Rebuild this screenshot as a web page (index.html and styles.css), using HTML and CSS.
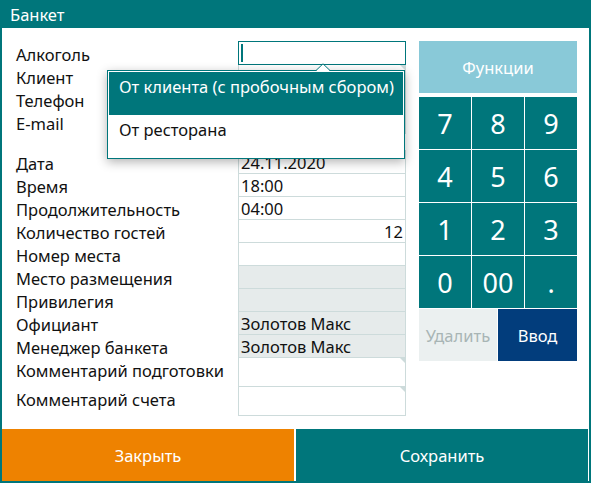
FILE: index.html
```html
<!DOCTYPE html>
<html lang="ru">
<head>
  <meta charset="UTF-8" />
  <title>Банкет</title>
  <link rel="stylesheet" href="styles.css">
</head>
<body>
<div class="window">
  <div class="title-bar">Банкет</div>

  <div class="content">
    <div class="form">
      <div class="group">
        <div class="row"><span class="label">Алкоголь</span><div class="field focused"><span class="caret"></span></div></div>
        <div class="row"><span class="label">Клиент</span><div class="field note"></div></div>
        <div class="row"><span class="label">Телефон</span><div class="field"></div></div>
        <div class="row"><span class="label">E-mail</span><div class="field"></div></div>
      </div>
      <div class="group">
        <div class="row"><span class="label">Дата</span><div class="field">24.11.2020</div></div>
        <div class="row"><span class="label">Время</span><div class="field">18:00</div></div>
        <div class="row"><span class="label">Продолжительность</span><div class="field">04:00</div></div>
        <div class="row"><span class="label">Количество гостей</span><div class="field num">12</div></div>
        <div class="row"><span class="label">Номер места</span><div class="field"></div></div>
        <div class="row"><span class="label">Место размещения</span><div class="field locked"></div></div>
        <div class="row"><span class="label">Привилегия</span><div class="field locked"></div></div>
        <div class="row"><span class="label">Официант</span><div class="field locked">Золотов Макс</div></div>
        <div class="row"><span class="label">Менеджер банкета</span><div class="field locked">Золотов Макс</div></div>
        <div class="row tall"><span class="label">Комментарий подготовки</span><div class="field note"></div></div>
        <div class="row tall"><span class="label">Комментарий счета</span><div class="field note"></div></div>
      </div>
    </div>

    <div class="side">
      <button class="func-btn">Функции</button>
      <div class="keypad">
        <button class="key">7</button>
        <button class="key">8</button>
        <button class="key">9</button>
        <button class="key">4</button>
        <button class="key">5</button>
        <button class="key">6</button>
        <button class="key">1</button>
        <button class="key">2</button>
        <button class="key">3</button>
        <button class="key">0</button>
        <button class="key">00</button>
        <button class="key">.</button>
      </div>
      <div class="key-actions">
        <button class="del-btn">Удалить</button>
        <button class="enter-btn">Ввод</button>
      </div>
    </div>

    <!-- alcohol choice list, opened under the field -->
    <svg class="notch" width="14" height="8" viewBox="0 0 14 8">
      <polygon points="0,8 7,1 14,8" fill="#fff"/>
      <polyline points="0,7.5 7,0.8 14,7.5" fill="none" stroke="#00767b" stroke-width="1"/>
    </svg>
    <div class="dropdown">
      <div class="option selected">От клиента (с пробочным сбором)</div>
      <div class="option">От ресторана</div>
    </div>
  </div>

  <div class="footer">
    <button class="close-btn">Закрыть</button>
    <button class="save-btn">Сохранить</button>
  </div>
</div>
</body>
</html>
```

FILE: styles.css
```css
body {
  margin: 0;
  font-family: "Noto Sans", sans-serif;
  color: #111;
}
button {
  font-family: inherit;
  border: none;
  padding: 0;
  cursor: pointer;
}
.window {
  width: 591px;
  height: 483px;
  box-sizing: border-box;
  border: 2px solid #00767b;
  border-top: 0;
  display: flex;
  flex-direction: column;
  background: #fff;
}
.title-bar {
  height: 28px;
  line-height: 29px;
  background: #00767b;
  color: #fff;
  font-size: 16.5px;
  padding-left: 8px;
}

/* Form + keypad */
.content {
  flex: 1;
  position: relative;
  display: flex;
  gap: 13px;
  padding: 13px 12px 0 14px;
}
.form {
  width: 390px;
}
.group + .group {
  margin-top: 17px;
}
.row {
  display: flex;
  align-items: flex-start;
  height: 23px;
}
.row.tall {
  height: 29px;
}
.label {
  width: 222px;
  padding-top: 2px;
  font-size: 16.5px;
  line-height: 23px;
  white-space: nowrap;
}
.field {
  position: relative;
  width: 168px;
  height: 24px;
  box-sizing: border-box;
  border: 1px solid #cddbdb;
  padding: 1px 2px 0;
  font-size: 16.5px;
  line-height: 22px;
  white-space: nowrap;
}
.row.tall .field {
  height: 30px;
}
.field.num {
  text-align: right;
}
.field.locked {
  background: #e6ebeb;
}
.field.focused {
  border-color: #00767b;
  z-index: 1;
}
.caret {
  position: absolute;
  left: 2px;
  top: 2px;
  width: 2px;
  height: 18px;
  background: #00767b;
}
/* folded corner on multi-line fields */
.field.note::after {
  content: "";
  position: absolute;
  top: 0;
  right: 0;
  border-style: solid;
  border-width: 0 5px 5px 0;
  border-color: transparent #cddbdb transparent transparent;
}

.side {
  width: 158px;
  display: flex;
  flex-direction: column;
}
.func-btn {
  height: 52px;
  margin-bottom: 4px;
  background: #89c9d8;
  color: #fff;
  font-size: 16.5px;
}
.keypad {
  display: grid;
  grid-template-columns: repeat(3, 52px);
  grid-auto-rows: 52px;
  gap: 1px;
}
.key {
  background: #00767b;
  color: #fff;
  font-size: 27px;
}
.key-actions {
  display: grid;
  grid-template-columns: 78px 79px;
  gap: 1px;
  height: 52px;
  margin-top: 1px;
}
.del-btn {
  background: #ebf0f0;
  color: #a8b5b5;
  font-size: 16.5px;
}
.enter-btn {
  background: #023d7c;
  color: #fff;
  font-size: 16.5px;
}

/* Dropdown list */
.dropdown {
  position: absolute;
  left: 105px;
  top: 42px;
  width: 298px;
  box-sizing: border-box;
  border: 1px solid #00767b;
  padding: 1px;
  background: #fff;
  box-shadow: 0 3px 10px rgba(0, 0, 0, 0.3);
  z-index: 2;
}
.option {
  height: 43px;
  box-sizing: border-box;
  padding: 5px 10px 0;
  font-size: 16.5px;
  line-height: 20px;
  white-space: nowrap;
}
.option + .option {
  height: 42px;
}
.option.selected {
  background: #00767b;
  color: #fff;
}
.notch {
  position: absolute;
  left: 314px;
  top: 35px;
  z-index: 3;
}

.footer {
  display: flex;
  gap: 2px;
  height: 52px;
  padding-right: 1px;
}
.footer button {
  flex: 1;
  color: #fff;
  font-size: 16.5px;
}
.close-btn {
  background: #ee8200;
}
.save-btn {
  background: #00767b;
}
```
